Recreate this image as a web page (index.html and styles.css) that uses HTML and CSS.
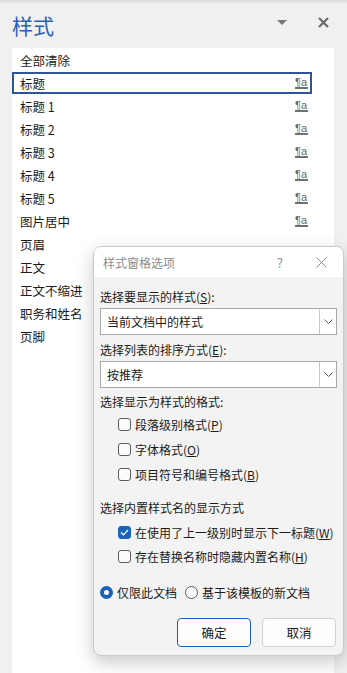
FILE: index.html
```html
<!DOCTYPE html>
<html lang="zh">
<head>
  <meta charset="UTF-8" />
  <title>样式</title>
  <link rel="stylesheet" href="styles.css">
</head>
<body>
  <div class="pane">
    <div class="pane-head">
      <div class="pane-title">样式</div>
      <div class="pane-tools">
        <span class="drop-tri"></span>
        <svg class="pane-close" width="11" height="11" viewBox="0 0 11 11">
          <path d="M1 1 L10 10 M10 1 L1 10" stroke="#6b6b6b" stroke-width="2.2"/>
        </svg>
      </div>
    </div>

    <div class="style-list">
      <div class="row"><span>全部清除</span></div>
      <div class="row selected"><span>标题</span><span class="pa">¶a</span></div>
      <div class="row"><span>标题 1</span><span class="pa">¶a</span></div>
      <div class="row"><span>标题 2</span><span class="pa">¶a</span></div>
      <div class="row"><span>标题 3</span><span class="pa">¶a</span></div>
      <div class="row"><span>标题 4</span><span class="pa">¶a</span></div>
      <div class="row"><span>标题 5</span><span class="pa">¶a</span></div>
      <div class="row"><span>图片居中</span><span class="pa">¶a</span></div>
      <div class="row"><span>页眉</span></div>
      <div class="row"><span>正文</span></div>
      <div class="row"><span>正文不缩进</span></div>
      <div class="row"><span>职务和姓名</span></div>
      <div class="row"><span>页脚</span></div>
    </div>
  </div>

  <div class="dialog">
    <div class="dlg-bar">
      <span class="dlg-title">样式窗格选项</span>
      <span class="dlg-help">?</span>
      <svg class="dlg-close" width="11" height="11" viewBox="0 0 11 11">
        <path d="M0.5 0.5 L10.5 10.5 M10.5 0.5 L0.5 10.5" stroke="#8a8a8a" stroke-width="1"/>
      </svg>
    </div>
    <div class="dlg-body">
      <div class="lbl">选择要显示的样式(<u>S</u>):</div>
      <div class="select">
        <span class="sel-text">当前文档中的样式</span>
        <span class="sel-btn"><svg width="9" height="5" viewBox="0 0 9 5"><path d="M0.5 0.5 L4.5 4.5 L8.5 0.5" fill="none" stroke="#555" stroke-width="1"/></svg></span>
      </div>
      <div class="lbl gap5">选择列表的排序方式(<u>E</u>):</div>
      <div class="select">
        <span class="sel-text">按推荐</span>
        <span class="sel-btn"><svg width="9" height="5" viewBox="0 0 9 5"><path d="M0.5 0.5 L4.5 4.5 L8.5 0.5" fill="none" stroke="#555" stroke-width="1"/></svg></span>
      </div>
      <div class="lbl gap4">选择显示为样式的格式:</div>
      <div class="checks">
        <div class="chk"><span class="box"></span><span class="txt">段落级别格式(<u>P</u>)</span></div>
        <div class="chk"><span class="box"></span><span class="txt">字体格式(<u>O</u>)</span></div>
        <div class="chk"><span class="box"></span><span class="txt">项目符号和编号格式(<u>B</u>)</span></div>
      </div>
      <div class="lbl gap11">选择内置样式名的显示方式</div>
      <div class="checks tight">
        <div class="chk"><span class="box on"><svg width="9" height="7" viewBox="0 0 9 7"><path d="M1 3.5 L3.5 6 L8 1" fill="none" stroke="#fff" stroke-width="1.2"/></svg></span><span class="txt">在使用了上一级别时显示下一标题(<u>W</u>)</span></div>
        <div class="chk"><span class="box"></span><span class="txt">存在替换名称时隐藏内置名称(<u>H</u>)</span></div>
      </div>
      <div class="radios">
        <div class="radio"><span class="dot on"></span><span class="txt">仅限此文档</span></div>
        <div class="radio"><span class="dot"></span><span class="txt">基于该模板的新文档</span></div>
      </div>
      <div class="buttons">
        <button class="btn primary">确定</button>
        <button class="btn">取消</button>
      </div>
    </div>
  </div>
</body>
</html>
```

FILE: styles.css
```css
body {
  margin: 0;
  width: 347px;
  height: 673px;
  overflow: hidden;
  background: #f0f0f0;
  font-family: "Noto Sans CJK SC", "Noto Sans", sans-serif;
  color: #1b1b1b;
  position: relative;
}
.pane {
  display: flex;
  flex-direction: column;
  height: 673px;
  background: linear-gradient(#d9d9d9, #f0f0f0 4px);
}
.pane-head {
  height: 48px;
  display: flex;
  align-items: center;
  justify-content: space-between;
  padding: 0 18px 0 12px;
  box-sizing: border-box;
}
.pane-title {
  font-size: 21px;
  color: #2b5fb3;
  margin-top: 2px;
}
.pane-tools {
  display: flex;
  align-items: center;
  gap: 31px;
  margin-top: -4px;
}
.drop-tri {
  width: 0;
  height: 0;
  border-left: 5px solid transparent;
  border-right: 5px solid transparent;
  border-top: 5px solid #777;
}
.style-list {
  flex-grow: 1;
  margin: 0 13px 0 12px;
  background: #fff;
  font-size: 12.5px;
}
.row {
  height: 22px;
  margin: 1px 0;
  width: 300px;
  box-sizing: border-box;
  border: 2px solid transparent;
  padding: 0 2px 0 6px;
  display: flex;
  align-items: center;
  justify-content: space-between;
}
.row.selected {
  border-color: #2d5597;
}
.pa {
  font-family: "Liberation Sans", sans-serif;
  font-size: 11px;
  line-height: 10px;
  color: #666;
  border-bottom: 2px solid #707070;
  padding-right: 1px;
}

.dialog {
  position: absolute;
  left: 93px;
  top: 246px;
  width: 251px;
  height: 410px;
  box-sizing: border-box;
  border: 1px solid #c9c9c9;
  border-radius: 8px;
  background: #f3f3f3;
  box-shadow: 0 6px 18px rgba(0,0,0,0.22);
  overflow: hidden;
  font-size: 12px;
}
.dlg-bar {
  height: 30px;
  background: #fff;
  display: flex;
  align-items: center;
  padding: 0 16px 0 9px;
}
.dlg-title {
  font-size: 12px;
  color: #8c8c8c;
  flex-grow: 1;
}
.dlg-help {
  font-size: 13px;
  color: #8c8c8c;
  margin-right: 33px;
}
.dlg-body {
  padding: 10px 6px 0 6px;
}
.lbl {
  height: 20px;
  line-height: 20px;
}
.gap5 { margin-top: 5px; }
.gap4 { margin-top: 4px; }
.gap11 { margin-top: 11px; }
.select {
  margin-top: 1px;
  height: 27px;
  box-sizing: border-box;
  border: 1px solid #a8a8a8;
  background: #fff;
  display: flex;
  align-items: stretch;
}
.sel-text {
  flex-grow: 1;
  padding-left: 6px;
  line-height: 25px;
}
.sel-btn {
  width: 16px;
  border-left: 1px solid #c8c8c8;
  display: flex;
  align-items: center;
  justify-content: center;
}
.checks {
  padding-left: 18px;
}
.chk {
  height: 25px;
  display: flex;
  align-items: center;
  gap: 4px;
}
.txt {
  white-space: nowrap;
}
.checks.tight .chk {
  height: 24px;
}
.checks.tight {
  margin-top: 2px;
}
.box {
  width: 13px;
  height: 13px;
  box-sizing: border-box;
  border: 1px solid #5c5c5c;
  border-radius: 3px;
  background: #fbfbfb;
  display: flex;
  align-items: center;
  justify-content: center;
}
.box.on {
  background: #1a62b8;
  border-color: #1a62b8;
}
.radios {
  margin-top: 14px;
  height: 20px;
  display: flex;
  align-items: center;
  gap: 8px;
}
.radio {
  display: flex;
  align-items: center;
  gap: 4px;
}
.dot {
  width: 13px;
  height: 13px;
  box-sizing: border-box;
  border: 1px solid #5c5c5c;
  border-radius: 50%;
  background: #fbfbfb;
}
.dot.on {
  border: 4px solid #1a62b8;
  background: #fff;
}
.buttons {
  margin-top: 16px;
  display: flex;
  justify-content: flex-end;
  gap: 11px;
  padding-right: 1px;
}
.btn {
  width: 74px;
  height: 29px;
  font-family: inherit;
  font-size: 12.5px;
  color: #1b1b1b;
  background: #fdfdfd;
  border: 1px solid #d0d0d0;
  border-radius: 4px;
}
.btn.primary {
  border-color: #1a62b8;
}
```
